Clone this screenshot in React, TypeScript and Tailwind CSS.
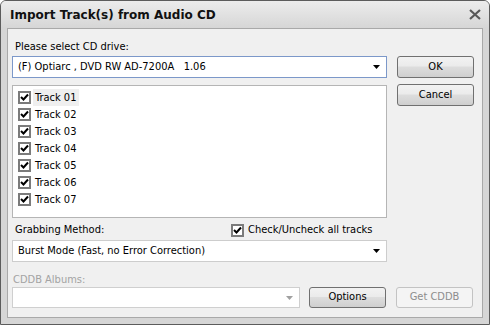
import type { ReactNode } from "react";

const TRACKS = ["Track 01", "Track 02", "Track 03", "Track 04", "Track 05", "Track 06", "Track 07"];

function CheckBox({ checked = true }: { checked?: boolean }) {
	return (
		<span className="flex h-[13px] w-[13px] shrink-0 items-center justify-center border-2 border-[#7b7b7b] bg-white">
			{checked && (
				<svg width="9" height="9" viewBox="0 0 9 9">
					<path d="M1 4 L3.5 6.5 L8 1.5" fill="none" stroke="#000" strokeWidth="2" />
				</svg>
			)}
		</span>
	);
}

function Arrow({ disabled = false }: { disabled?: boolean }) {
	return (
		<svg width="7" height="4" viewBox="0 0 7 4" className="shrink-0">
			<path d="M0 0 H7 L3.5 4 Z" fill={disabled ? "#a0a0a0" : "#000"} />
		</svg>
	);
}

function Button({ children, disabled = false, className = "" }: { children: ReactNode; disabled?: boolean; className?: string }) {
	return (
		<div
			className={`flex h-[21px] w-[77px] items-center justify-center rounded-[3px] border ${
				disabled
					? "border-[#c3c3c3] bg-[#f4f4f4] text-[#8d8d8d]"
					: "border-[#707070] bg-[linear-gradient(#f2f2f2,#ebebeb_45%,#dddddd_50%,#cfcfcf)] text-black"
			} ${className}`}
		>
			{children}
		</div>
	);
}

function Combo({ text, focused = false, disabled = false, className = "" }: { text: string; focused?: boolean; disabled?: boolean; className?: string }) {
	return (
		<div
			className={`flex items-center justify-between bg-white pl-[5px] pr-[6px] border ${
				focused ? "border-[#7c98c9]" : disabled ? "border-[#cfcfcf]" : "border-[#cdcdcd]"
			} ${className}`}
		>
			<span className="whitespace-pre">{text}</span>
			<Arrow disabled={disabled} />
		</div>
	);
}

export default function App() {
	return (
		<div
			className="flex h-[325px] w-[490px] flex-col overflow-hidden rounded-t-[6px] border border-[#5c5c5c] bg-[#d6d6d6] text-[11px] text-black"
			style={{ fontFamily: '"DejaVu Sans Condensed", "Liberation Sans", sans-serif' }}
		>
			{/* title bar */}
			<div className="flex h-[27px] shrink-0 items-center justify-between bg-[linear-gradient(#ececec,#d6d6d6)] pl-[9px] pr-[8px]">
				<span className="text-[12px] font-bold text-[#111]" style={{ fontFamily: '"DejaVu Sans", sans-serif' }}>
					Import Track(s) from Audio CD
				</span>
				<svg width="12" height="11" viewBox="0 0 12 11">
					<path d="M1 1 L11 10 M11 1 L1 10" stroke="#5a5a5a" strokeWidth="2.2" />
				</svg>
			</div>

			{/* client */}
			<div className="mx-[6px] mb-[6px] flex flex-1 flex-col border border-[#a9a9a9] bg-[#f0f0f0] pl-[4px]">
				<div className="flex">
					<div className="flex w-[375px] flex-col">
						<div className="ml-[3px] mt-[11px] h-[14px] leading-[14px]">Please select CD drive:</div>
						<Combo text="(F) Optiarc , DVD RW AD-7200A   1.06" focused className="mt-[2px] h-[22px]" />

						<div className="mt-[7px] flex h-[133px] flex-col border border-[#b5b5b5] bg-white pl-[5px] pt-[3px]">
							{TRACKS.map((t, i) => (
								<div key={t} className="flex h-[17px] items-center gap-[2px]">
									<CheckBox />
									<span className={`px-[2px] leading-[17px] ${i === 0 ? "bg-[#efefef] pr-[3px]" : ""}`}>{t}</span>
								</div>
							))}
						</div>

						<div className="mt-[5px] flex h-[15px] items-center whitespace-nowrap">
							<span className="ml-[3px] w-[216px]">Grabbing Method:</span>
							<CheckBox />
							<span className="ml-[4px]">Check/Uncheck all tracks</span>
						</div>
						<Combo text="Burst Mode (Fast, no Error Correction)" className="mt-[2px] h-[22px]" />
						<div className="ml-[1px] mt-[10px] h-[15px] leading-[15px] text-[#a3a3a3]">CDDB Albums:</div>
					</div>

					<div className="ml-[10px] flex flex-col">
						<Button className="mt-[27px] h-[22px]">OK</Button>
						<Button className="mt-[6px] h-[22px]">Cancel</Button>
					</div>
				</div>

				<div className="flex items-center">
					<Combo text="" disabled className="h-[21px] w-[288px]" />
					<Button className="ml-[9px]">Options</Button>
					<Button disabled className="ml-[10px]">Get CDDB</Button>
				</div>
			</div>
		</div>
	);
}
